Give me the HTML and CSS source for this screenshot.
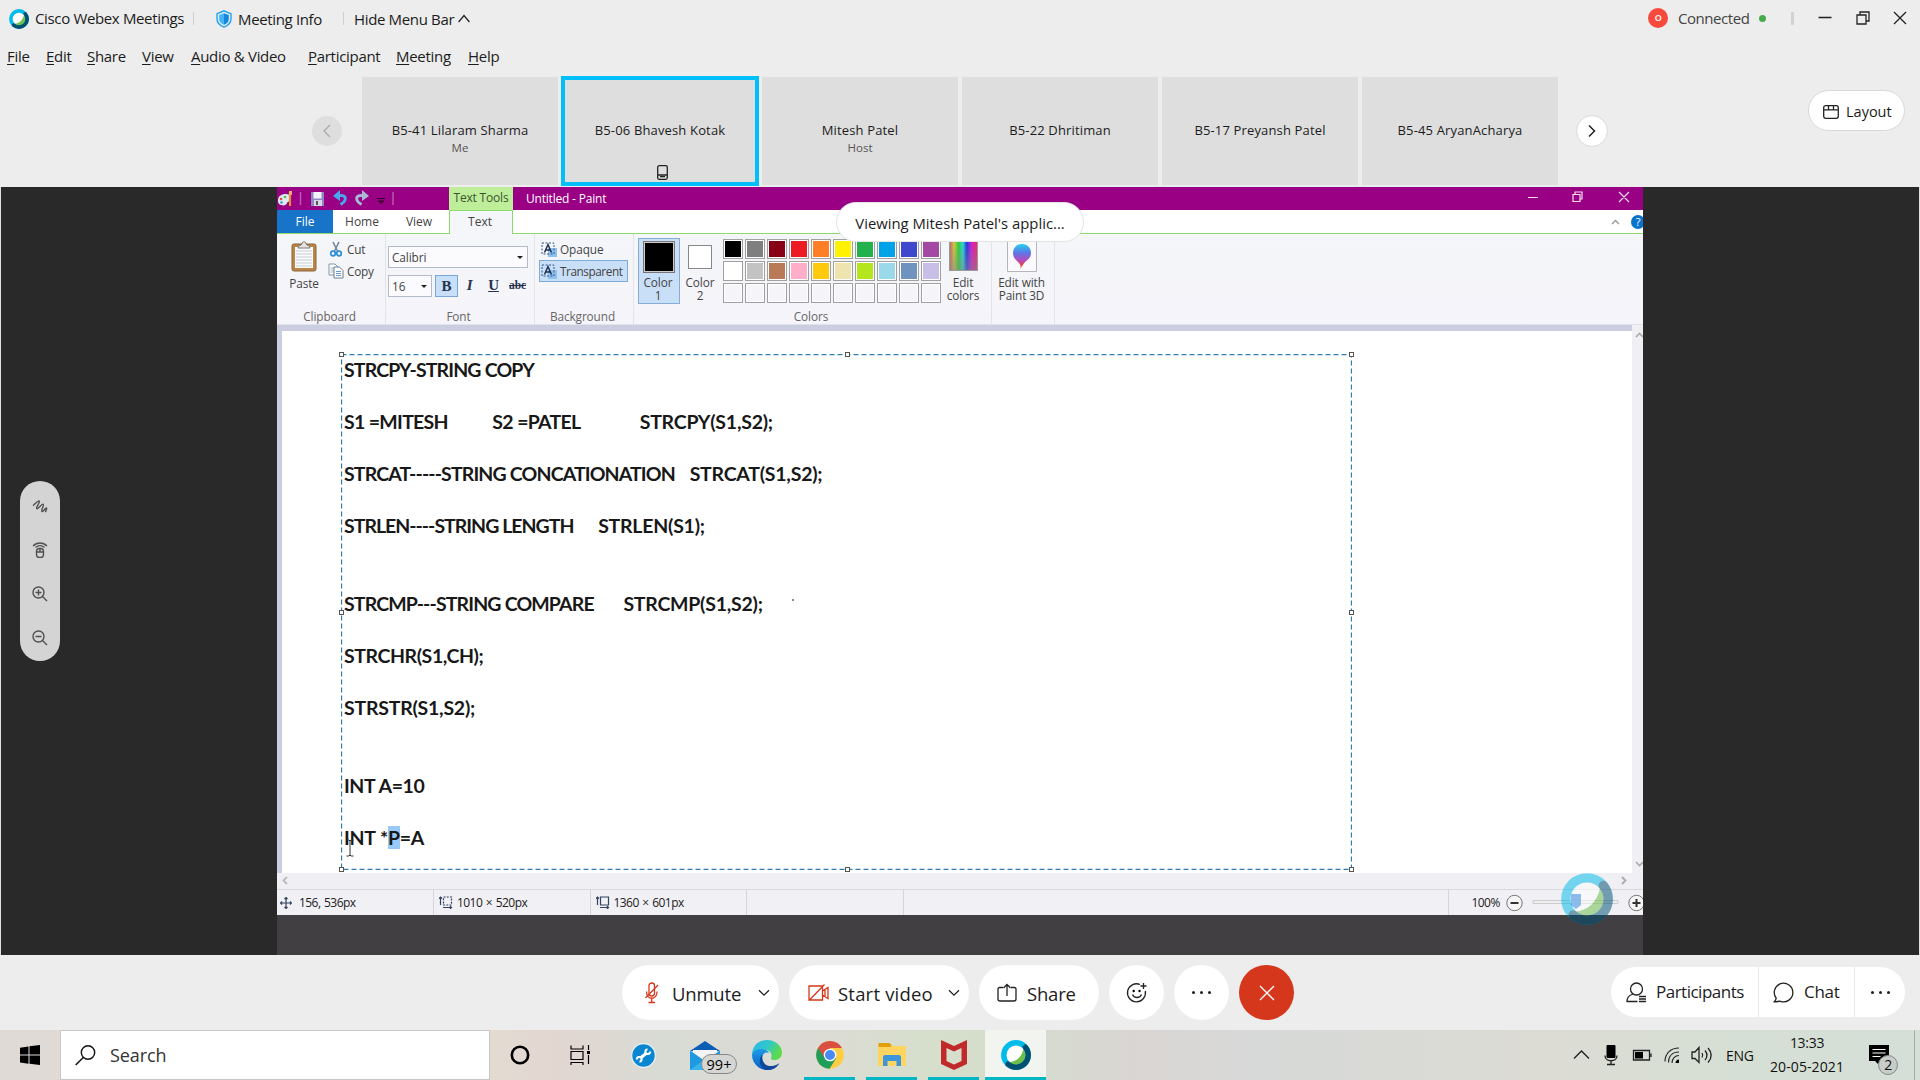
FILE: index.html
```html
<!DOCTYPE html>
<html lang="en">
<head>
<meta charset="utf-8">
<title>Cisco Webex Meetings</title>
<link rel="stylesheet" href="styles.css">
</head>
<body>
<svg width="0" height="0" class="defs">
  <defs>
    <linearGradient id="balloon" x1="0" y1="0" x2="0" y2="1"><stop offset="0" stop-color="#25d0ee"/><stop offset=".35" stop-color="#5b78e8"/><stop offset=".65" stop-color="#b44bbd"/><stop offset=".82" stop-color="#e0405a"/><stop offset="1" stop-color="#f6c544"/></linearGradient>
    <linearGradient id="edgeTop" x1="0" y1="0" x2="1" y2=".4"><stop offset="0" stop-color="#2fb4ee"/><stop offset=".55" stop-color="#2fc8c8"/><stop offset="1" stop-color="#5edb4a"/></linearGradient>
    <linearGradient id="edgeLow" x1="0" y1="0" x2="0" y2="1"><stop offset="0" stop-color="#1c9be6"/><stop offset="1" stop-color="#0b62c4"/></linearGradient>
    <symbol id="webex" viewBox="0 0 30 30">
      <circle cx="15" cy="15" r="12.2" fill="#fff" stroke="#00bceb" stroke-width="5.4"/>
      <path d="M22.500 9C20.500 17 16 21.500 8.500 22.300A9.600 9.600 0 0 0 24.500 15 9 9 0 0 0 22.500 9z" fill="#6cc04a"/>
      <path d="M24.400 7.200A12.200 12.200 0 0 1 7 24.200" fill="none" stroke="#005073" stroke-width="5.400" stroke-linecap="round"/>
    </symbol>
  </defs>
</svg>
<div class="app">
  <header class="topbar">
    <svg class="logo" width="20" height="20"><use href="#webex"/></svg>
    <span class="brand">Cisco Webex Meetings</span>
    <i class="vsep"></i>
    <svg class="shield" width="16" height="18" viewBox="0 0 16 18"><path d="M8 .8 15 3.600V9c0 4-3 6.600-7 8.200C4 15.600 1 13 1 9V3.600z" fill="#d5edfb" stroke="#1d9bee" stroke-width="1.300"/><path d="M8 3.200 12.800 5v4c0 2.800-1.900 4.500-4.800 5.800z" fill="#1787dc"/><path d="M8 3.200 3.200 5v4c0 2.800 1.900 4.500 4.800 5.800z" fill="#45b3f5"/></svg>
    <span class="info">Meeting Info</span>
    <i class="vsep"></i>
    <span class="hide">Hide Menu Bar</span>
    <svg class="chev" width="12" height="9" viewBox="0 0 12 9"><path d="M.6 8 6 1.500 11.400 8" class="ln"/></svg>
    <div class="status">
      <span class="red">O</span><span class="conn">Connected</span><i class="green"></i><i class="thick"></i>
      <svg width="90" height="14" viewBox="0 0 90 14"><path d="M.5 6.500h13M39 4h9v9h-9zM42 3.500V1h9v9h-2.500M76 1l12 12M88 1 76 13" class="ln"/></svg>
    </div>
  </header>
  <nav class="menu">
    <span class="m1"><u>F</u>ile</span><span class="m2"><u>E</u>dit</span><span class="m3"><u>S</u>hare</span><span class="m4"><u>V</u>iew</span><span class="m5"><u>A</u>udio &amp; Video</span><span class="m6"><u>P</u>articipant</span><span class="m7"><u>M</u>eeting</span><span><u>H</u>elp</span>
  </nav>
  <section class="strip">
    <div class="arrow off"><svg width="8" height="14" viewBox="0 0 8 14"><path d="M7 1 1 7l6 6" fill="none" stroke="#aaa" stroke-width="1.300"/></svg></div>
    <div class="tiles">
      <div class="tile"><b>B5-41 Lilaram Sharma</b><small>Me</small></div>
      <div class="tile active"><b>B5-06 Bhavesh Kotak</b><svg width="11" height="15" viewBox="0 0 11 15"><rect x=".7" y=".7" width="9.600" height="13.600" rx="1.500" class="ln"/><path d="M3 11.700h5M1 10h9" class="ln"/></svg></div>
      <div class="tile"><b>Mitesh Patel</b><small>Host</small></div>
      <div class="tile"><b>B5-22 Dhritiman</b></div>
      <div class="tile"><b>B5-17 Preyansh Patel</b></div>
      <div class="tile"><b>B5-45 AryanAcharya</b></div>
    </div>
    <div class="arrow on"><svg width="8" height="14" viewBox="0 0 8 14"><path d="m1 1.500 5.500 5.500L1 12.500" fill="none" stroke="#222" stroke-width="1.500"/></svg></div>
    <div class="layout"><svg width="16" height="14" viewBox="0 0 16 14"><rect x=".7" y=".7" width="14.600" height="12.600" rx="2" class="ln"/><path d="M1 4.800h14M5.500 1v3.500M10.500 1v3.500" class="ln"/></svg><span>Layout</span></div>
  </section>

  <main class="stage">
    <aside class="left">
      <div class="tools">
        <svg width="16" height="14" viewBox="0 0 16 14"><path d="M1 6C3 4.500 5.500 1 7 1.200 8.800 1.600 3.300 8.300 4.900 9 6.400 9.500 9.500 3.800 11.100 4.400 12.600 5.100 8.600 11 10 11.900 11.300 12.500 13.300 7.700 14.500 8.300 15.500 9 13.500 11 13.500 12.500" class="tl" transform="translate(0 -.3)"/></svg>
        <svg width="16" height="16" viewBox="0 0 16 16"><rect x="4.500" y="6.500" width="7" height="9" rx="3" class="tl"/><path d="M4.500 10h7M8 6.500V10M1 4c4-4 10-4 14 0M3.500 5.500c3-2.500 6-2.500 9 0" class="tl"/></svg>
        <svg width="16" height="16" viewBox="0 0 16 16"><circle cx="6.500" cy="6.500" r="5.500" class="tl"/><path d="m10.500 10.500 4.500 4.500M3.500 6.500h6M6.500 3.500v6" class="tl"/></svg>
        <svg width="16" height="16" viewBox="0 0 16 16"><circle cx="6.500" cy="6.500" r="5.500" class="tl"/><path d="m10.500 10.500 4.500 4.500M3.500 6.500h6" class="tl"/></svg>
      </div>
    </aside>
    <div class="paint">
      <div class="ptitle">
        <div class="quick">
          <svg width="125" height="23" viewBox="0 0 125 23">
            <path d="M1 14c0-5 3-7 8-7 4 0 5 3 4.500 6-.5 2-3 1-3.500 3s-3 3-6 2c-2-.5-3-2-3-4z" fill="#dcecf3"/><circle cx="4" cy="12" r="1.300" fill="#e64c3c"/><circle cx="8" cy="10" r="1.300" fill="#58b947"/><circle cx="4.500" cy="15.500" r="1.200" fill="#3a8fd0"/><path d="M13 5v14" stroke="#e98a35" stroke-width="2.200"/><path d="M12 4h3v4h-3z" fill="#efb06a"/>
            <path d="M23.500 5v13M116 5v13" stroke="#b65ba9" stroke-width="1.500"/>
            <path d="M34 5h13v14H34z" fill="#8f86c4"/><path d="M36.500 5h8v6.500h-8z" fill="#f3f2fa"/><path d="M37 13h8v6h-8z" fill="#dad8e8"/><path d="M39 14h2v4h-2z" fill="#555"/>
            <path d="M60 8.500h4c4 0 5 2 4 4.500-.5 2-2 3-4.500 4.500" fill="none" stroke="#4aa7ee" stroke-width="3"/><path d="m63 3-7 6 7 5z" fill="#4aa7ee"/>
            <path d="M88 8.500h-4c-4 0-5 2-4 4.500.5 2 2 3 4.500 4.500" fill="none" stroke="#a9b8d6" stroke-width="3"/><path d="m85 3 7 6-7 5z" fill="#a9b8d6"/>
            <path d="M100 11.500h8M101.500 14h5l-2.500 2.500z" stroke="#2f0028" fill="#2f0028"/>
          </svg>
        </div>
        <div class="ctx">Text Tools</div>
        <div class="pname">Untitled - Paint</div>
        <svg class="pwin" width="104" height="14" viewBox="0 0 104 14"><path d="M1 7.500h10M46 4.500h7v7h-7zM48 4V2h7v7h-2M92 2l10 10M102 2 92 12" fill="none" stroke="#f3dff0" stroke-width="1.200"/></svg>
      </div>
      <div class="ptabs">
        <div class="file">File</div><div class="tab home">Home</div><div class="tab view">View</div><div class="tab text">Text</div>
        <div class="help"><svg width="9" height="6" viewBox="0 0 9 6"><path d="m1 5 3.500-3.500L8 5" fill="none" stroke="#999" stroke-width="1.400"/></svg><span>?</span></div>
      </div>
      <div class="ribbon">
        <div class="grp clip">
          <div class="body">
            <div class="paste"><svg width="26" height="31" viewBox="0 0 26 31"><rect x="1" y="3" width="24" height="27" rx="2" fill="#b98649" stroke="#8f6432"/><path d="M4 6h18v21H4z" fill="#fbfbfb"/><path d="M5 10h16M5 13h16M5 16h16M5 19h16M5 22h16M5 25h16" stroke="#c5ccd6" stroke-width="1"/><path d="M7 7c0-3 3-2 4-4 0-3 4-3 4 0 1 2 4 1 4 4z" fill="#e5e5e5" stroke="#777"/></svg><span>Paste</span></div>
            <div class="cc">
              <div><svg width="16" height="16" viewBox="0 0 16 16"><path d="m5 1 5 10M11 1 6 11" stroke="#72869b" stroke-width="1.600"/><circle cx="5" cy="12.500" r="2.300" fill="none" stroke="#2c8fd6" stroke-width="1.700"/><circle cx="11" cy="12.500" r="2.300" fill="none" stroke="#2c8fd6" stroke-width="1.700"/></svg>Cut</div>
              <div><svg width="16" height="16" viewBox="0 0 16 16"><path d="M1 1h6l3 3v8H1z" fill="#fff" stroke="#8492a5"/><path d="M2.500 5h5M2.500 7h4M2.500 9h4" stroke="#9bb"/><path d="M6 4h5.500L15 7.500V15H6z" fill="#fff" stroke="#6c7c92"/><path d="M8 8.500h5M8 10.500h5M8 12.500h5" stroke="#6a9ac6"/></svg>Copy</div>
            </div>
          </div>
          <label>Clipboard</label>
        </div>
        <div class="grp font">
          <div class="body">
            <div class="sel fam"><span>Calibri</span><i></i></div>
            <div class="frow"><div class="sel size"><span>16</span><i></i></div><div class="fb bold">B</div><div class="fb it">I</div><div class="fb un">U</div><div class="fb st">abc</div></div>
          </div>
          <label>Font</label>
        </div>
        <div class="grp bg">
          <div class="body">
            <div class="opt"><svg width="16" height="15" viewBox="0 0 16 15"><path d="M7 6h9v9H7z" fill="#8fc1ef"/><path d="M1 1h12v11H1z" fill="none" stroke="#35578c" stroke-dasharray="2 1.500"/><path d="m3.500 10.500 3.500-8 3.500 8M5 8h4" fill="none" stroke="#1f3050" stroke-width="1.500"/></svg>Opaque</div>
            <div class="opt on"><svg width="16" height="15" viewBox="0 0 16 15"><path d="M7 6h9v9H7z" fill="#8fc1ef"/><path d="M1 1h12v11H1z" fill="none" stroke="#35578c" stroke-dasharray="2 1.500"/><path d="m3.500 10.500 3.500-8 3.500 8M5 8h4" fill="none" stroke="#1f3050" stroke-width="1.500"/></svg>Transparent</div>
          </div>
          <label>Background</label>
        </div>
        <div class="grp colors">
          <div class="body">
            <div class="cbtn c1"><i></i><span>Color<br>1</span></div>
            <div class="cbtn c2"><i></i><span>Color<br>2</span></div>
            <div class="pal">
              <i class="k1"></i><i class="k2"></i><i class="k3"></i><i class="k4"></i><i class="k5"></i><i class="k6"></i><i class="k7"></i><i class="k8"></i><i class="k9"></i><i class="k10"></i>
              <i class="k11"></i><i class="k12"></i><i class="k13"></i><i class="k14"></i><i class="k15"></i><i class="k16"></i><i class="k17"></i><i class="k18"></i><i class="k19"></i><i class="k20"></i>
              <i></i><i></i><i></i><i></i><i></i><i></i><i></i><i></i><i></i><i></i>
            </div>
            <div class="cbtn ec"><i></i><span>Edit<br>colors</span></div>
          </div>
          <label>Colors</label>
        </div>
        <div class="grp p3d">
          <div class="body"><div class="cbtn"><svg width="30" height="32" viewBox="0 0 30 32"><path d="M.5.500h29v31H.5z" fill="#fafafc" stroke="#b5b5ba"/><path d="M15 4c6 0 9 4.500 9 9 0 6-5 7-7.500 11l-3 5c-.5-3 .5-4-1.500-6-3-3-6-5-6-10 0-4.500 3-9 9-9z" fill="url(#balloon)"/></svg><span>Edit with<br>Paint 3D</span></div></div>
        </div>
      </div>
      <div class="work">
        <div class="canvas">
          <div class="textbox">
            <svg class="dash" width="1011" height="516"><rect x=".5" y=".5" width="1010" height="515" fill="none" stroke="#2d7eb0" stroke-width="1.300" stroke-dasharray="5 3"/></svg>
<pre><span class="x4">STRCPY-STRING COPY</span>

<span class="x3">S1 =MITESH</span>         <span class="x3">S2 =PATEL</span>            <span class="x1">STRCPY(S1,S2);</span>

<span class="x4">STRCAT-----STRING CONCATIONATION</span>   <span class="x1">STRCAT(S1,S2);</span>

<span class="x5">STRLEN----STRING LENGTH</span>     <span class="x1">STRLEN(S1);</span>


<span class="x4">STRCMP---STRING COMPARE</span>      <span class="x1">STRCMP(S1,S2);</span>

<span class="x2">STRCHR(S1,CH);</span>

<span class="x1">STRSTR(S1,S2);</span>


<span class="x2">INT A=10</span>

<span class="x1">INT *<mark>P</mark>=A</span></pre>
            <i class="h tl0"></i><i class="h tc0"></i><i class="h tr0"></i><i class="h ml0"></i><i class="h mr0"></i><i class="h bl0"></i><i class="h bc0"></i><i class="h br0"></i>
            <i class="speck"></i>
            <svg class="ibeam" width="8" height="18" viewBox="0 0 8 18"><path d="M.5 1h2.500l1 1 1-1h2.500M4 2v14M.5 17h2.500l1-1 1 1h2.500" fill="none" stroke="#333"/></svg>
          </div>
        </div>
        <div class="vscroll"><svg width="9" height="6" viewBox="0 0 9 6"><path d="m1 5 3.500-3.500L8 5" fill="none" stroke="#aaa" stroke-width="1.600"/></svg><svg width="9" height="6" viewBox="0 0 9 6"><path d="m1 1 3.500 3.500L8 1" fill="none" stroke="#aaa" stroke-width="1.600"/></svg></div>
      </div>
      <div class="hscroll"><svg width="6" height="9" viewBox="0 0 6 9"><path d="M5 1 1.500 4.500 5 8" fill="none" stroke="#bbb" stroke-width="1.800"/></svg><svg width="6" height="9" viewBox="0 0 6 9"><path d="m1 1 3.500 3.500L1 8" fill="none" stroke="#aaa" stroke-width="1.800"/></svg></div>
      <div class="pstatus">
        <div class="s1"><svg width="12" height="12" viewBox="0 0 12 12"><path d="M6 .5v11M.5 6h11M4.500 2 6 .5 7.500 2M4.500 10 6 11.500 7.500 10M2 4.500.5 6 2 7.500M10 4.500 11.500 6 10 7.500" class="ic"/></svg><span>156, 536px</span></div>
        <div class="s2"><svg width="14" height="13" viewBox="0 0 14 13"><path d="M4.500 1h8v8h-8z" class="ic" stroke-dasharray="2 1.200"/><path d="M1.500 9V1M0 2.500 1.500 1 3 2.500M4 11.500h8.500M11 10l1.500 1.500L11 13" class="ic"/></svg><span>1010 × 520px</span></div>
        <div class="s2"><svg width="14" height="13" viewBox="0 0 14 13"><path d="M4.500 1h8v8h-8z" class="ic"/><path d="M1.500 9V1M0 2.500 1.500 1 3 2.500M4 11.500h8.500M11 10l1.500 1.500L11 13" class="ic"/></svg><span>1360 × 601px</span></div>
        <div class="s2"></div>
        <div class="s5"></div>
        <div class="s6"><span>100%</span><svg width="138" height="24" viewBox="0 0 138 24"><circle cx="9.500" cy="12" r="7.700" fill="#f6f6f6" stroke="#777"/><path d="M5.500 12h8" stroke="#333" stroke-width="2"/><path d="M28 9.500h85v3H28z" fill="#eee" stroke="#ccc"/><path d="M66 3h10v11l-5 4-5-4z" fill="#0a72d8"/><circle cx="131.500" cy="12" r="7.700" fill="#f6f6f6" stroke="#777"/><path d="M127.500 12h8M131.500 8v8" stroke="#333" stroke-width="2"/></svg></div>
      </div>
      <div class="pill">Viewing Mitesh Patel's applic...</div>
      <svg class="mark" width="52" height="52"><use href="#webex"/></svg>
    </div>
    <aside class="right"></aside>
  </main>

  <section class="controls">
    <div class="cb unmute"><svg width="18" height="22" viewBox="0 0 18 22"><rect x="6" y="1" width="5.500" height="13" rx="2.700" class="rd"/><path d="M3.500 9.500c0 9 10.500 9 10.500 0M8.700 16v4.500M5.500 20.500h6.500M15 3 2.500 16" class="rd"/></svg><span>Unmute</span><svg class="dn" width="12" height="8" viewBox="0 0 12 8"><path d="m1 1.200 5 5 5-5" class="ln"/></svg></div>
    <div class="cb video"><svg width="21" height="18" viewBox="0 0 21 18"><path d="M1 2h13.500v14H1zM14.500 7 20 3.500v11L14.500 11M17 5v8M1 16.500 16.500.5" class="rd"/></svg><span>Start video</span><svg class="dn" width="12" height="8" viewBox="0 0 12 8"><path d="m1 1.200 5 5 5-5" class="ln"/></svg></div>
    <div class="cb share"><svg width="20" height="19" viewBox="0 0 20 19"><path d="M6 4.500H2.500A1.500 1.500 0 0 0 1 6v10a2 2 0 0 0 2 2h14a2 2 0 0 0 2-2V6a1.500 1.500 0 0 0-1.500-1.500H14M10 13V1.500M6.500 5 10 1.500 13.500 5" class="ln"/></svg><span>Share</span></div>
    <div class="cb rnd"><svg width="22" height="22" viewBox="0 0 22 22"><path d="M14 2.500A9 9 0 1 0 19.300 9M17.500 1v6M14.500 4h6M6.500 12.500c1.500 4 7.500 4 9 0" class="ln"/><circle cx="7.700" cy="9" r="1.200"/><circle cx="13.500" cy="9" r="1.200"/></svg></div>
    <div class="cb rnd"><i class="dots"></i></div>
    <div class="cb rnd end"><svg width="16" height="16" viewBox="0 0 16 16"><path d="m1 1 14 14M15 1 1 15" fill="none" stroke="#fff" stroke-width="1.300"/></svg></div>
    <div class="panel">
      <div class="pp"><svg width="21" height="21" viewBox="0 0 21 21"><circle cx="10.500" cy="7" r="6" class="ln"/><path d="M7 12c-4 1.200-6 3.500-6 7.500h10.500M13 14.500h7M13 17h7M13 19.500h7" class="ln"/></svg><span>Participants</span></div>
      <div class="ch"><svg width="21" height="21" viewBox="0 0 21 21"><path d="M3.200 16.200A9.300 9.300 0 1 1 7.500 19.300C5.500 19 4 20 1.300 19.800 2.500 18.500 3 17.500 3.200 16.200z" class="ln"/></svg><span>Chat</span></div>
      <div class="mo"><i class="dots"></i></div>
    </div>
  </section>

  <footer class="taskbar">
    <div class="win"><svg width="20" height="20" viewBox="0 0 20 20"><path d="M0 2.700 8.500 1.400V9.500H0zM9.500 1.300 20 0v9.500H9.500zM0 10.500h8.500v8.200L0 17.500zM9.500 10.500H20V20L9.500 18.800z"/></svg></div>
    <div class="search"><svg width="21" height="21" viewBox="0 0 21 21"><circle cx="13" cy="7.500" r="6.700" fill="none" stroke="#111" stroke-width="1.400"/><path d="M8.300 12.500.7 20" stroke="#111" stroke-width="1.500"/></svg><span>Search</span></div>
    <div class="t cort"><svg width="20" height="20" viewBox="0 0 20 20"><circle cx="10" cy="10" r="8.200" fill="none" stroke="#000" stroke-width="2.600"/></svg></div>
    <div class="t"><svg width="21" height="20" viewBox="0 0 21 20"><path d="M1 .5V4h12V.5M1 6.500h12v8H1zM1 20v-2.500h12V20M18.500 0v5M18.500 10v9" fill="none" stroke="#000" stroke-width="1.200"/><path d="M17 6h3v3h-3z"/></svg></div>
    <div class="t wr"><svg width="25" height="25" viewBox="0 0 25 25"><circle cx="12.500" cy="12.500" r="11.800" fill="#0a86d0" stroke="#e9f4fa" stroke-width="1.200"/><path d="m9.500 15 6-5" stroke="#fff" stroke-width="3"/><path d="M19.200 8.500a2.400 2.400 0 1 1-2.700-2.300M5.800 16.500a2.400 2.400 0 1 1 2.700 2.300" fill="none" stroke="#fff" stroke-width="2"/></svg></div>
    <div class="t mail"><svg width="30" height="29" viewBox="0 0 30 29"><path d="M0 10 15 0l15 10z" fill="#0a5cb5"/><path d="M3 9h24v10H3z" fill="#f4f4f4"/><path d="M0 9.500 15 20l15-10.500V29H0z" fill="#1e9be0"/><path d="M0 29 15 18l15 11z" fill="#37b4ee"/></svg><em>99+</em></div>
    <div class="t edge"><svg width="30" height="30" viewBox="0 0 30 30"><path d="M0 15C0 6 6.500 0 15 0s15 6 15 12.500c0 5-3.500 7.500-7.500 7.500-3 0-4-1.300-3.300-2.600C20.500 14 18 9.500 12 9.500 6 9.500 1 13 0 15z" fill="url(#edgeTop)"/><path d="M0 15c1-4 5-6.500 10.500-6 4 .4 6 2.500 6.500 4-5-2-8 3-6 8s7 8.500 12 7C18 31 11 31 5.500 26.500 2 23.500 0 19.500 0 15z" fill="url(#edgeLow)"/><path d="M10.500 14.500c-2 6 2.500 12.500 10 11.500 3-.4 5.500-1.600 7-3-2.500 5-8 7.500-13.500 7-7-2-8-12-3.500-15.500z" fill="#10479a"/></svg></div>
    <div class="t run"><svg width="28" height="28" viewBox="0 0 28 28"><circle cx="14" cy="14" r="13.800" fill="#ffcd42"/><path d="M2 7A13.800 13.800 0 0 0 13.500 27.800L20 17.500 14 14z" fill="#1f9d5b"/><path d="M2 7A13.800 13.800 0 0 1 26 7H14L8 16z" fill="#d94f41"/><circle cx="14" cy="14" r="6.300" fill="#fff"/><circle cx="14" cy="14" r="5" fill="#4a8af4"/></svg></div>
    <div class="t run"><svg width="28" height="24" viewBox="0 0 28 24"><path d="M.5 0h11l2 2v3H.5z" fill="#e0a009"/><path d="M0 4h12l2-1h14v20H0z" fill="#ffd561"/><path d="M5 23v-9a2 2 0 0 1 2-2h14a2 2 0 0 1 2 2v9h-4.500v-5h-9v5z" fill="#3d96dc"/></svg></div>
    <div class="t run"><svg width="26" height="30" viewBox="0 0 26 30"><path d="m0 0 13 6L26 0v24l-13 6-13-6zM5.500 8v13L13 24.500l7.500-3.500V8L13 11.500z" fill="#c12a2a"/></svg></div>
    <div class="t cur"><svg width="30" height="30"><use href="#webex"/></svg></div>
    <div class="tray">
      <svg width="144" height="24" viewBox="0 0 144 24"><path d="m1 15.500 7.500-7.500 7.500 7.500" class="ln"/><rect x="33.500" y="2" width="9" height="13" rx="1"/><path d="M32 12.500c0 7 12 7 12 0M38 18v3.500M34 21.500h8" class="ln"/><path d="M60.500 7.500h16v9.500h-16zM78 10.500v3.500" class="ln"/><path d="M62 9h8v6.500h-8z"/><path d="M92 18.500C92 10 98 5 106 5M95.500 19.500C95.500 12.500 100 9 106 9M99 20c0-4.500 3-7.500 7-7.500" fill="none" stroke="#222" stroke-width="1.100"/><path d="M102.500 20c0-2 1.500-3.500 3.500-3.500V20z"/><path d="M119 9h3l4-4.500v15L122 15.500h-3zM129 10c1 1.500 1 3 0 4.500M132 7.500c2.500 3 2.500 6.500 0 9.500M135 5c4 4.500 4 10 0 14.500" class="ln"/></svg>
      <span class="eng">ENG</span>
      <div class="clock"><span>13:33</span><span class="date">20-05-2021</span></div>
      <div class="note"><svg width="20" height="20" viewBox="0 0 20 20"><path d="M0 0h20v16h-9l-2 3-3-3H0z"/><path d="M3.500 4.500h13M3.500 8h13M3.500 11.500h8" stroke="#fff" stroke-width="1.100"/></svg><em>2</em></div>
    </div>
  </footer>
</div>
</body>
</html>
```
FILE: styles.css
```css
*{box-sizing:border-box}
body{margin:0;background:#ededed;font-family:"Open Sans","Noto Sans",sans-serif;color:#1c1c1c;overflow:hidden}
i,em{font-style:normal}
svg{display:block;flex:none}
.defs{position:absolute}
.app{width:1920px;height:1080px;display:flex;flex-direction:column;white-space:nowrap}
.ln{fill:none;stroke:#222;stroke-width:1.3}
.tl{fill:none;stroke:#505050;stroke-width:1.4}
.ic{fill:none;stroke:#33425f;stroke-width:1.2}
.rd{fill:none;stroke:#d4371c;stroke-width:1.3}

.topbar{height:37px;display:flex;align-items:center;padding-left:9px;font-size:15px;letter-spacing:-.35px}
.brand{width:158px;margin-left:6px;padding-bottom:1px}
.vsep{width:1px;height:13px;background:#cfcfcf}
.shield{margin-left:22px}
.info{width:105px;margin-left:6px}
.hide{width:104px;margin-left:10px}
.status{margin-left:auto;display:flex;align-items:center;padding:0 12px 1px 0}
.red{width:20px;height:20px;border-radius:50%;background:#f8493d;color:#fff;font-size:9px;font-weight:600;line-height:20px;text-align:center}
.conn{width:81px;margin-left:10px;padding-bottom:1px;color:#444;letter-spacing:-.45px}
.green{width:7px;height:7px;border-radius:50%;background:#46ac49}
.thick{width:3px;height:13px;margin:0 24px 0 25px;background:#d0d3d3}
.menu{height:39px;display:flex;align-items:center;padding-left:7px;padding-bottom:1px;font-size:15px;letter-spacing:-.3px}
.menu u{text-underline-offset:2px}
.m1{width:39px}.m2{width:41px}.m3{width:55px}.m4{width:49px}.m5{width:117px}.m6{width:88px}.m7{width:72px}
.strip{height:111px;display:flex;align-items:flex-start;padding-top:1px}
.arrow{width:32px;height:32px;margin-top:38px;border-radius:50%;display:flex;align-items:center;justify-content:center}
.arrow.off{width:30px;height:30px;margin:39px 20px 0 312px;background:#dedede}
.arrow.on{margin-left:18px;background:#fff;border:1px solid #dadada}
.tiles{display:flex;gap:4px}
.tile{width:196px;height:108px;background:#dedede;display:flex;flex-direction:column;align-items:center;padding-top:44px}
.tile b{font-size:13px;line-height:18px;font-weight:400;letter-spacing:.15px}
.tile small{font-size:11.500px;line-height:17px;color:#555}
.active{box-shadow:0 0 0 1px #00bff9,inset 0 0 0 3px #00bff9}
.active svg{margin:26px 0 0 4px}
.layout{width:97px;height:41px;margin:13px 0 0 200px;border:1px solid #d8d8d8;border-radius:21px;background:#fff;display:flex;align-items:center;gap:7px;padding:2px 0 0 14px;font-size:14.500px}

.stage{height:768px;display:flex;border:solid #e0e0e0;border-width:0 1px}
.left{width:276px;background:#292929;padding:294px 0 0 19px}
.right{width:276px;background:#292929}
.tools{width:40px;height:180px;border-radius:20px;background:#d4d4d4;display:flex;flex-direction:column;align-items:center;justify-content:space-between;padding:19px 0 15px}
.paint{width:1366px;position:relative;background:#413f42;overflow:hidden;font-size:12px;color:#444}
.ptitle{height:23px;background:#990084;display:flex;align-items:center}
.quick{width:172px}
.ctx{width:64px;height:23px;background:#bfee9a;line-height:21px;text-align:center;color:#3c5430;letter-spacing:-.2px}
.pname{margin-left:13px;color:#fff;letter-spacing:-.2px}
.pwin{margin:-3px 12px 0 auto}
.ptabs{height:24px;background:#fff;border-bottom:1px solid #8edb6c;display:flex;line-height:23px;text-align:center}
.file{width:56px;background:#1874c8;color:#fff}
.home{width:58px}.view{width:58px;padding-right:2px}
.text{width:64px;height:24px;background:#f5f6f9;border:solid #8edb6c;border-width:1px 1px 0;padding-right:2px;line-height:22px}
.help{margin-left:auto;display:flex;align-items:center;gap:11px}
.help span{width:14px;height:14px;margin:0 -2px 0 0;border-radius:7px;background:#0873cd;color:#fff;line-height:14px;font-size:11px}
.ribbon{height:91px;background:linear-gradient(#f4f6f9,#f5f4fa);display:flex;border-bottom:1px solid #dde5ea;font-size:11.800px;letter-spacing:-.1px}
.grp{border-right:1px solid #e2e4ea;display:flex;flex-direction:column;align-items:center;height:90px}
.grp .body{height:72px;width:100%}
.grp label{line-height:18px;padding:1px 3px 0 0;margin-bottom:-1px;color:#666}
.clip{width:109px}.font{width:149px}.bg{width:99px}.colors{width:358px}.p3d{width:63px}
.clip .body{display:flex}
.paste{width:53px;padding:7px 0 0 1px;display:flex;flex-direction:column;align-items:center;line-height:20px}
.paste svg{margin-bottom:1px}
.cc{padding-top:4px;margin-left:-2px}
.cc div{display:flex;gap:3px;align-items:center;height:22px;letter-spacing:-.25px}
.font .body{padding:12px 0 0 2px}
.sel{height:22px;border:1px solid #b3bac9;background:#fbfbfe;display:flex;align-items:center;justify-content:space-between;padding:0 4px 0 3px}
.sel i{border:solid transparent;border-width:3px 3px 0;border-top-color:#222}
.fam{width:140px;margin-bottom:7px}
.size{width:44px}
.frow{display:flex}
.fb{width:23px;height:22px;line-height:20px;text-align:center;font-family:"Liberation Serif",serif;font-size:15px;font-weight:700;color:#26334f}
.bold{margin-left:3px;background:#c7dff8;border:1px solid #7aa7d9}
.it{font-style:italic}.un{text-decoration:underline;margin-left:1px}
.st{text-decoration:line-through;font-size:11.500px;margin-left:1px}
.bg .body{padding:4px 0 0 4px}
.opt{width:89px;height:22px;display:flex;align-items:center;gap:3px;padding-left:2px}
.opt.on{background:#c9dff7;border:1px solid #7fabd9;padding-left:1px;letter-spacing:-.45px}
.colors .body{display:flex;padding:4px 0 0 4px}
.cbtn{display:flex;flex-direction:column;align-items:center;text-align:center;line-height:13px;flex:none}
.c1{width:42px;height:66px;background:#c9dff7;border:1px solid #86acd6;padding-top:2px}
.c1 i{width:32px;height:32px;background:#000;border:1px solid #777;box-shadow:inset 0 0 0 1px #ccc;margin-bottom:3px}
.c1 span{padding-right:2px}
.c2{width:40px;padding-top:7px}
.c2 i{width:24px;height:24px;background:#fff;border:1px solid #888;margin-bottom:7px}
.pal{display:grid;grid-template-columns:repeat(10,20px);grid-auto-rows:20px;gap:2px;padding:1px 0 0 3px;flex:none}
.pal i{border:1px solid #a0a0a0;box-shadow:inset 0 0 0 1px #fff}
.ec{width:44px;padding-top:3px}
.ec i{width:29px;height:30px;border:1px solid #999;margin-bottom:5px;background:linear-gradient(transparent,#8888),linear-gradient(90deg,#c66,#cc4 15%,#3c3 32%,#2dd 48%,#23d 62%,#b2d 78%,#f26)}
.p3d .cbtn{padding:6px 3px 0 0}.p3d svg{margin-bottom:4px}
.k1{background:#000}.k2{background:#7f7f7f}.k3{background:#880015}.k4{background:#ed1c24}.k5{background:#ff7f27}.k6{background:#fff200}.k7{background:#22b14c}.k8{background:#00a2e8}.k9{background:#3f48cc}.k10{background:#a349a4}
.k11{background:#fff}.k12{background:#c3c3c3}.k13{background:#b97a57}.k14{background:#ffaec9}.k15{background:#ffc90e}.k16{background:#efe4b0}.k17{background:#b5e61d}.k18{background:#99d9ea}.k19{background:#7092be}.k20{background:#c8bfe7}
.work{height:548px;display:flex;background:#f0eff3}
.canvas{width:1355px;background:#fff;border:solid #cbcde0;border-width:6px 0 0 5px;padding:23px 0 0 59px}
.textbox{position:relative;width:1011px;height:516px}
.dash{position:absolute}
.textbox pre{margin:0;padding:3px 0 0 3px;font:700 19.500px/26px Lato,"Open Sans",sans-serif;color:#181818;position:relative;word-spacing:.2px}
.x1{letter-spacing:-.24px}.x2{letter-spacing:-.42px}.x3{letter-spacing:-.72px}.x4{letter-spacing:-.87px}.x5{letter-spacing:-1px}
mark{background:#99c9f8;color:inherit}
.h{position:absolute;width:5px;height:5px;border:1px solid #555;background:#fff}
.tl0,.tc0,.tr0{top:-2px}.ml0,.mr0{top:256px}.bl0,.bc0,.br0{top:513px}
.tl0,.ml0,.bl0{left:-2px}.tc0,.bc0{left:504px}.tr0,.mr0,.br0{left:1008px}
.speck{position:absolute;left:451px;top:245px;width:2px;height:2px;background:#888}
.ibeam{position:absolute;left:5px;top:485px}
.vscroll{width:11px;padding:7px 0 6px 3px;display:flex;flex-direction:column;justify-content:space-between}
.hscroll{height:17px;background:#f0eff3;border-bottom:1px solid #d8d8dc;display:flex;align-items:center;justify-content:space-between;padding:0 16px 2px 5px}
.pstatus{height:25px;background:#f1f0f4;display:flex;line-height:25px;letter-spacing:-.55px;word-spacing:1px;color:#222}
.pstatus>div{display:flex;align-items:center;border-right:1px solid #d5d5da;flex:none}
.s1{width:157px;gap:7px;padding-left:3px}
.s2{width:156.500px;gap:4px;padding-left:5px}
.s5{width:545px}
.pstatus .s6{border:0;padding-left:23px;width:194px;gap:5px}
.s6 span{width:28px}
.pill{position:absolute;left:559px;top:15px;width:248px;height:40px;border-radius:20px;border:1px solid #e4e4e4;background:#fff;line-height:40px;text-align:center;font-size:14.850px;color:#1c1c1c}
.mark{position:absolute;left:1284px;top:686px;opacity:.52}

.controls{height:75px;display:flex;align-items:flex-start;padding:10px 15px 0 622px;font-size:18.500px;letter-spacing:-.2px}
.cb{height:55px;border-radius:28px;background:#fff;display:flex;align-items:center;margin-right:10px}
.cb span{padding-top:1px}
.unmute{width:157px;padding-left:21px}.unmute span{width:86px;margin-left:11px}
.video{width:180px;padding-left:19px}.video span{width:110px;margin-left:9px;letter-spacing:.2px}
.share{width:120px;padding-left:18px;gap:10px}
.rnd{width:55px;justify-content:center}
.end{background:#d5371c}
.dots{width:3px;height:3px;border-radius:50%;background:#222;box-shadow:-8px 0 #222,8px 0 #222}
.panel{width:294px;height:50px;margin:2px 0 0 auto;border-radius:25px;background:#fff;display:flex;font-size:17px;letter-spacing:-.5px}
.panel div{display:flex;align-items:center;border-right:1px solid #e8e8e8}
.panel span{padding-bottom:1px}
.pp{width:148px;padding-left:15px;gap:9px}
.ch{width:96px;padding-left:14px;gap:10px;letter-spacing:-.3px}
.panel .mo{width:50px;justify-content:center;border:0}

.taskbar{height:50px;display:flex;background:linear-gradient(90deg,#dfdad6 0,#e3dbd2 490px,#e2d6d1 560px,#d8dbd4 660px,#dddbd6 800px,#d6dfcb 940px,#d6dacf 1060px,#d9d5d3 1130px,#d7d9d8 1260px,#dcdcd4 1560px,#d6dfd4 1730px,#d4dfd8 1920px)}
.win{width:60px;display:flex;align-items:center;justify-content:center}
.search{width:430px;background:#fff;border:1px solid #c8c8c8;display:flex;align-items:center;gap:14px;padding-left:14px;font-size:18px;letter-spacing:-.1px;color:#333}
.t{width:62px;display:flex;align-items:center;justify-content:center}
.cort{width:59px}
.wr{width:63px;padding-left:2px}
.mail{width:61px;padding-left:1px;position:relative}
.mail em{position:absolute;left:27px;top:24px;width:36px;height:20px;border:1px solid #888;border-radius:10px;background:#d5d5d3;font-size:14.500px;line-height:19px;text-align:center;color:#000}
.edge{width:64px;padding-right:1px}
.run{width:51px;margin:0 6px 0 5px;border-bottom:3px solid #00b7c3;padding-top:3px}
.cur{width:61px;background:#f1f4ef;border-bottom:3px solid #00b7c3;padding-top:3px}
.tray{margin-left:auto;margin-right:5px;padding-right:25px;border-right:1px solid #aaa;display:flex;align-items:center;font-size:14px;letter-spacing:-.3px;color:#111}
.eng{width:41px;margin-left:9px}
.clock{width:80px;display:flex;flex-direction:column;text-align:center;line-height:24px}
.date{letter-spacing:.1px}
.note{position:relative;width:20px;margin-left:22px}
.note em{position:absolute;left:9px;top:10px;width:20px;height:20px;border:1px solid #888;border-radius:50%;background:#c7cdc8;line-height:18px;text-align:center}
```
